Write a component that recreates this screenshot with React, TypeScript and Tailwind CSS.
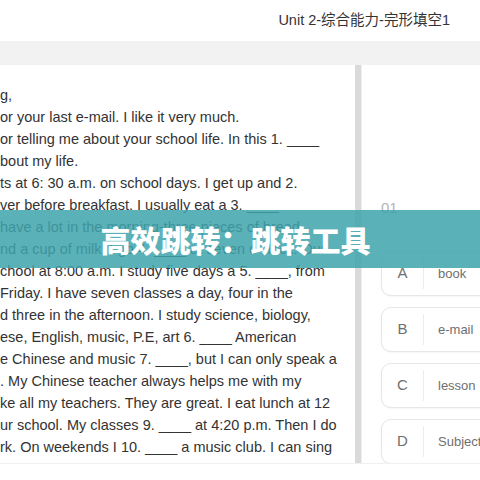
const lines = [
  'g,',
  'or your last e-mail. I like it very much.',
  'or telling me about your school life. In this 1. ____',
  'bout my life.',
  'ts at 6: 30 a.m. on school days. I get up and 2.',
  'ver before breakfast. I usually eat a 3. ____',
  'have a lot in the morning-three pieces of bread',
  'nd a cup of milk. I go 4. ____ at seven o\u2019clock. Our',
  'chool at 8:00 a.m. I study five days a 5. ____, from',
  'Friday. I have seven classes a day, four in the',
  'd three in the afternoon. I study science, biology,',
  'ese, English, music, P.E, art 6. ____ American',
  'e Chinese and music 7. ____, but I can only speak a',
  '. My Chinese teacher always helps me with my',
  'ke all my teachers. They are great. I eat lunch at 12',
  'ur school. My classes 9. ____ at 4:20 p.m. Then I do',
  'rk. On weekends I 10. ____ a music club. I can sing',
  'ong songs, well. I think I will go with my friends to the',
];

const options = [
  { key: 'A', text: 'book' },
  { key: 'B', text: 'e-mail' },
  { key: 'C', text: 'lesson' },
  { key: 'D', text: 'Subject' },
];

// ── Option card ────────────────────────────────────────────
const OptionCard = ({ k, text }: { k: string; text: string }) => (
  <div className="flex h-[45px] w-[220px] shrink-0 items-center rounded-[10px] border border-[#e6e6e6] bg-white shadow-[0_1px_2px_rgba(0,0,0,0.04)]">
    <div className="flex h-full w-[41px] items-center justify-center text-[15px] text-[#6f6f6f]">
      {k}
    </div>
    <div className="h-[31px] w-px bg-[#ececec]" />
    <div className="pl-[14px] text-[13px] text-[#6f6f6f]">{text}</div>
  </div>
);

export default function App() {
  return (
    <div
      className="relative h-[480px] w-[480px] overflow-hidden bg-white"
      style={{ fontFamily: '"Liberation Sans", Arial, "Noto Sans CJK SC", sans-serif' }}
    >
      {/* header */}
      <div className="flex h-[41px] items-center justify-end pr-[30px] text-[14.5px] text-[#333]">
        Unit 2-综合能力-完形填空1
      </div>
      <div className="h-[24px] bg-[#f2f2f3]" />

      {/* main */}
      <div className="flex h-[398px]">
        {/* passage */}
        <div className="relative flex w-[362px] shrink-0 overflow-hidden">
          <div className="flex-1 overflow-hidden whitespace-nowrap pt-[19px] text-[14.5px] leading-[22px] text-[#333]">
            {lines.map((l, i) => (
              <div key={i}>{l}</div>
            ))}
          </div>
          <div className="w-[7px] shrink-0 border-r border-[#eeeeee] bg-[#dadada]" />
        </div>

        {/* options */}
        <div className="flex flex-1 flex-col overflow-hidden pl-[19px] pt-[134px]">
          <div className="mb-[34px] text-[15px] leading-[18px] text-[#b4b4b4]">01</div>
          <div className="flex flex-col gap-[11px]">
            {options.map((o) => (
              <OptionCard key={o.key} k={o.key} text={o.text} />
            ))}
          </div>
        </div>
      </div>
      <div className="h-px bg-[#f0f0f0]" />

      {/* banner overlay */}
      <div className="absolute left-0 top-[210px] flex h-[58px] w-full items-center justify-center bg-[#3ea3ac]/85 pr-[9px]">
        <span
          className="text-[30px] font-black text-white"
          style={{ fontFamily: '"Noto Sans CJK SC", sans-serif' }}
        >
          高效跳转：跳转工具
        </span>
      </div>
    </div>
  );
}
